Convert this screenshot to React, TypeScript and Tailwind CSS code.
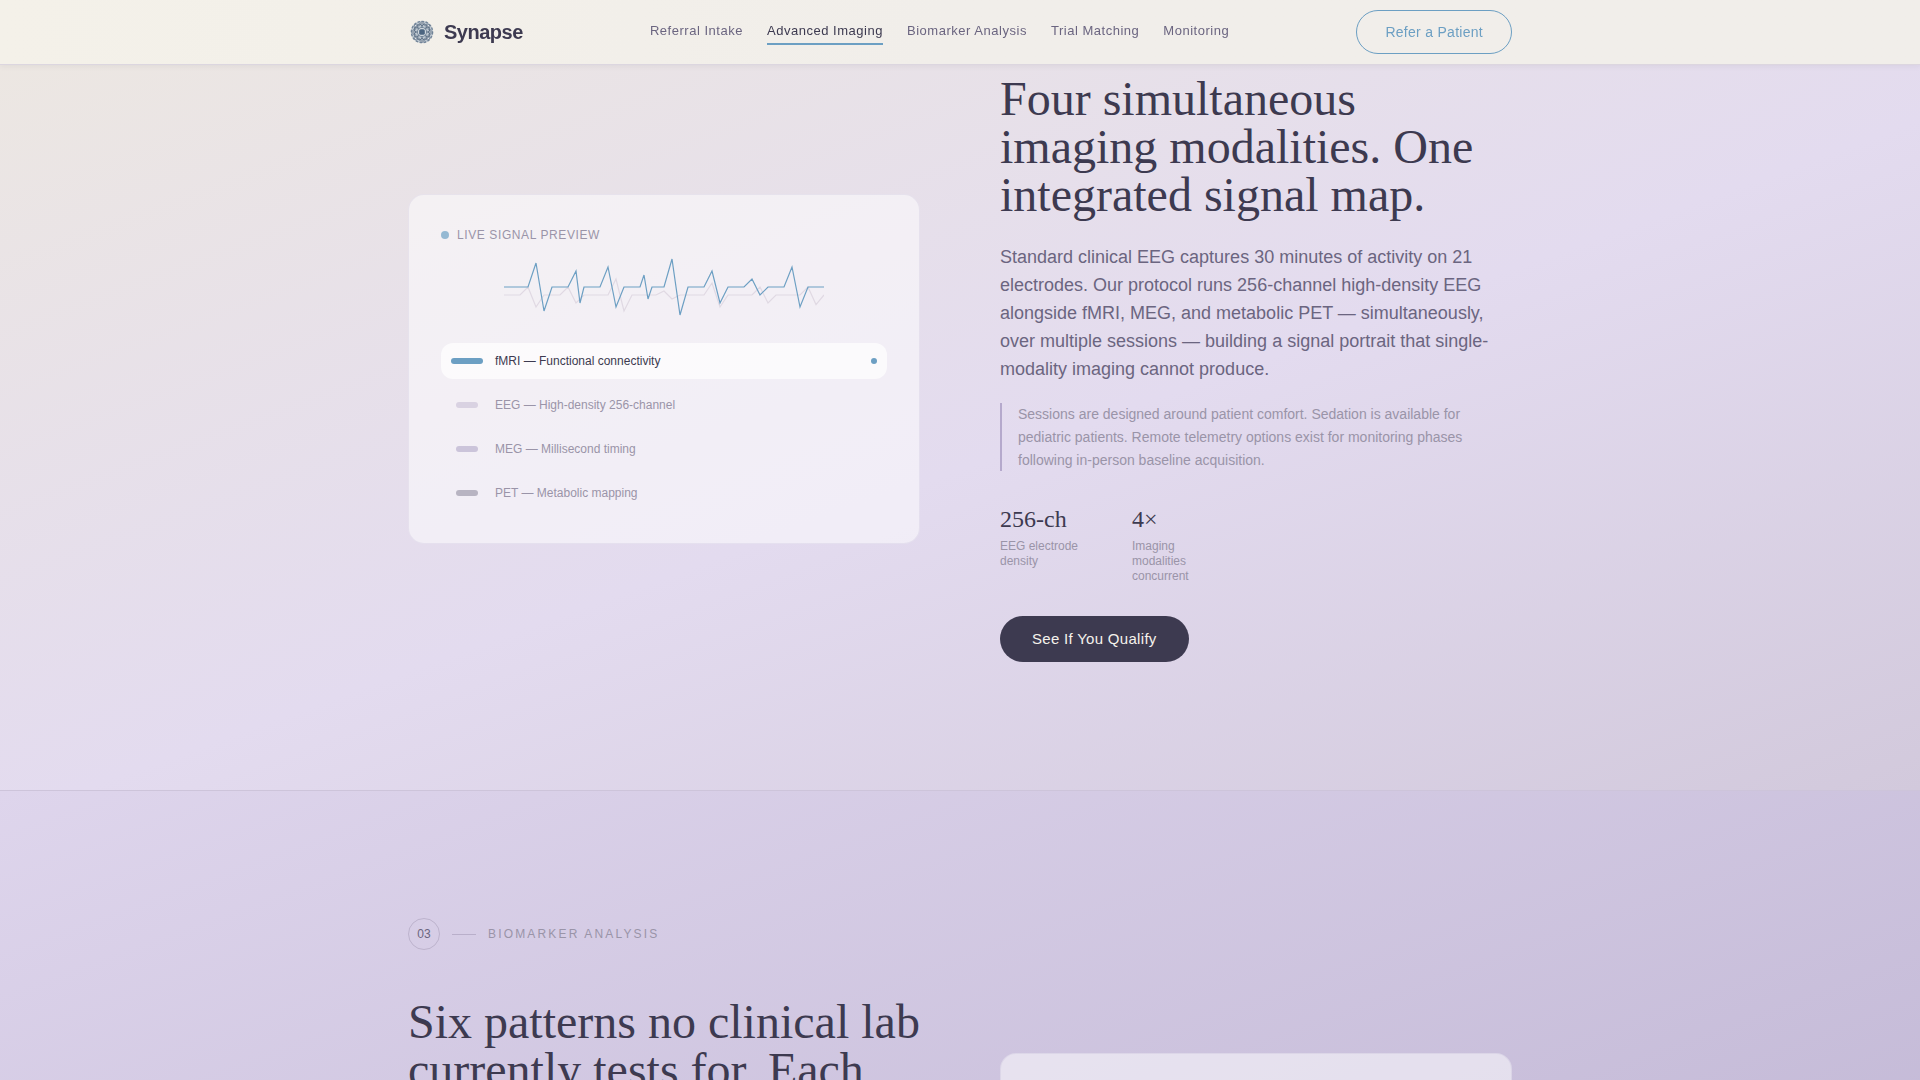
import React from 'react';

const SANS = "font-['Liberation_Sans',Arial,sans-serif]";
const SERIF = "font-['Liberation_Serif','Times_New_Roman',serif]";

const NAV_LINKS = [
  { label: 'Referral Intake', href: '#referral' },
  { label: 'Advanced Imaging', href: '#imaging', active: true },
  { label: 'Biomarker Analysis', href: '#biomarkers' },
  { label: 'Trial Matching', href: '#trials' },
  { label: 'Monitoring', href: '#monitoring' },
];

const MODALITIES = [
  { label: 'fMRI — Functional connectivity', color: 'bg-[#6c9fc3]', active: true },
  { label: 'EEG — High-density 256-channel', color: 'bg-[#d9d2e2]' },
  { label: 'MEG — Millisecond timing', color: 'bg-[#cbc4da]' },
  { label: 'PET — Metabolic mapping', color: 'bg-[#b8b4c2]' },
];

const PETALS = [0, 45, 90, 135, 180, 225, 270, 315];

const Logo: React.FC = () => (
  <svg viewBox="0 0 28 28" className="size-7" fill="none" aria-hidden="true">
    <circle cx="14" cy="14" r="11" fill="#bcc6cf" />
    <circle cx="14" cy="14" r="10.6" stroke="#74869a" strokeWidth="1.4" strokeDasharray="2.6 1.5" />
    {PETALS.map((angle) => (
      <g key={angle} transform={`rotate(${angle} 14 14)`} stroke="#5d7085">
        <path d="M14 10.6V8.2M14 8.2L11.6 5.4M14 8.2L16.4 5.4" strokeWidth="1" />
        <circle cx="14" cy="5" r="1.2" fill="#e0e3e6" strokeWidth="0.8" />
        <circle cx="17" cy="6.8" r="0.9" fill="#5d7085" stroke="none" />
      </g>
    ))}
    <circle cx="14" cy="14" r="4.6" fill="#cfd7dd" stroke="#6f8296" strokeWidth="0.9" />
    <rect x="11.2" y="11.2" width="5.6" height="5.6" rx="1.6" fill="#4c6580" />
  </svg>
);

const Header: React.FC = () => (
  <header className="fixed inset-x-0 top-0 z-10 border-b border-[#dcd6df] bg-linear-to-r from-[#f4f1e9] via-[#f1eeea] to-[#f1eeea] shadow-[0_1px_6px_rgba(61,58,80,0.08)]">
    <div className="mx-auto flex h-16 max-w-[1200px] items-center justify-between px-12">
      <a href="#top" className="flex items-center gap-2 text-xl font-bold tracking-tight text-[#3d3a50]">
        <Logo />
        Synapse
      </a>
      <nav className="flex gap-6 text-[13px] leading-4 tracking-[0.04em] text-[#6b6580]">
        {NAV_LINKS.map((link) => (
          <a
            key={link.label}
            href={link.href}
            className={
              link.active
                ? 'border-b-2 border-[#6c9fc3] pt-1 pb-1 text-[#3d3a50]'
                : 'border-b-2 border-transparent pt-1 pb-1'
            }
          >
            {link.label}
          </a>
        ))}
      </nav>
      <button
        type="button"
        className="h-11 rounded-full border border-[#6c9fc3] px-7 text-sm tracking-[0.02em] text-[#6c9fc3]"
      >
        Refer a Patient
      </button>
    </div>
  </header>
);

const SignalTrace: React.FC = () => (
  <svg viewBox="0 0 400 80" className="mx-auto mt-3 mb-6 h-16 w-80" fill="none" aria-hidden="true">
    <polyline
      points="0,50 20,50 30,40 40,65 50,50 70,50 80,40 90,60 100,50 130,50 140,30 150,70 160,50 190,50 200,45 210,55 220,50 250,50 260,35 270,65 280,50 310,50 320,40 330,60 340,50 370,50 380,40 390,62 400,50"
      stroke="#e0d9e3"
      strokeWidth="1.5"
    />
    <polyline
      points="0,40 30,40 40,10 50,70 60,40 80,40 90,20 95,60 100,40 120,40 130,15 140,65 150,40 170,40 175,25 180,55 185,40 200,40 210,5 220,75 230,40 250,40 260,20 270,60 280,40 300,40 310,30 320,50 330,40 350,40 360,15 370,65 380,40 400,40"
      stroke="#6c9fc3"
      strokeWidth="1.5"
    />
  </svg>
);

const SignalCard: React.FC = () => (
  <div className="rounded-2xl border border-[#b5a9cc]/20 bg-white/50 p-8 text-xs">
    <div className="flex h-4 items-center gap-2 tracking-wider text-[#9a94a8]">
      <span className="size-2 rounded-full bg-[#95b9d3]" />
      LIVE SIGNAL PREVIEW
    </div>
    <SignalTrace />
    <ul className="flex flex-col gap-2">
      {MODALITIES.map((item) => (
        <li
          key={item.label}
          className={
            item.active
              ? 'flex h-9 items-center gap-3 rounded-xl bg-white/70 px-[10px] text-[#3d3a50]'
              : 'flex h-9 items-center gap-3 rounded-xl px-[10px] text-[#9a94a8]'
          }
        >
          <span className="flex w-8 justify-center">
            <span className={`h-[6px] rounded-full ${item.active ? 'w-8' : 'w-[22px]'} ${item.color}`} />
          </span>
          {item.label}
          {item.active && <span className="ml-auto size-[6px] rounded-full bg-[#6c9fc3]" />}
        </li>
      ))}
    </ul>
  </div>
);

const ImagingSection: React.FC = () => (
  <section
    id="imaging"
    className="bg-[linear-gradient(160deg,#ede8e1_0%,#e3dbef_55%,#d2c9dc_100%)] pt-[75px] pb-32"
  >
    <div className="mx-auto grid max-w-[1200px] grid-cols-2 items-center gap-20 px-12">
      <SignalCard />
      <div>
        <h2 className={`${SERIF} text-5xl leading-none text-[#3d3a50]`}>
          Four simultaneous imaging modalities. One integrated signal map.
        </h2>
        <p className="mt-6 text-lg leading-7 text-[#6b6580]">
          Standard clinical EEG captures 30 minutes of activity on 21 electrodes. Our protocol runs
          256-channel high-density EEG alongside fMRI, MEG, and metabolic PET — simultaneously, over
          multiple sessions — building a signal portrait that single-modality imaging cannot produce.
        </p>
        <p className="mt-5 border-l-2 border-[#b5a9cc] pl-4 text-sm leading-relaxed text-[#9a94a8]">
          Sessions are designed around patient comfort. Sedation is available for pediatric
          patients. Remote telemetry options exist for monitoring phases following in-person
          baseline acquisition.
        </p>
        <dl className="mt-8 flex gap-12">
          <div className="flex w-[84px] flex-col-reverse justify-end gap-1">
            <dt className="text-xs leading-[15px] text-[#9a94a8]">EEG electrode density</dt>
            <dd className={`${SERIF} text-2xl leading-8 text-[#3d3a50]`}>256-ch</dd>
          </div>
          <div className="flex w-[60px] flex-col-reverse justify-end gap-1">
            <dt className="text-xs leading-[15px] text-[#9a94a8]">Imaging modalities concurrent</dt>
            <dd className={`${SERIF} text-2xl leading-8 text-[#3d3a50]`}>4×</dd>
          </div>
        </dl>
        <button
          type="button"
          className="mt-8 h-[46px] rounded-full bg-[#3d3a50] px-8 text-[15px] tracking-[0.02em] text-[#f5f2ec]"
        >
          See If You Qualify
        </button>
      </div>
    </div>
  </section>
);

const BiomarkerSection: React.FC = () => (
  <section
    id="biomarkers"
    className="border-t border-[#cdc4da] bg-[linear-gradient(160deg,#ded5ec_0%,#c4bad7_75%)] pt-[127px] pb-32"
  >
    <div className="mx-auto max-w-[1200px] px-12">
      <div className="mb-12 flex items-center gap-3 text-xs text-[#9a94a8]">
        <span className="flex size-8 items-center justify-center rounded-full border border-[#bdb3cd] text-[#6b6580]">
          03
        </span>
        <span className="h-px w-6 bg-[#b9afca]" />
        <span className="tracking-[0.18em]">BIOMARKER ANALYSIS</span>
      </div>
      <div className="grid grid-cols-2 gap-20">
        <h2 className={`${SERIF} text-5xl leading-none text-[#3d3a50]`}>
          Six patterns no clinical lab currently tests for. Each
        </h2>
        <div className="mt-[55px] h-80 rounded-2xl border border-[#b5a9cc]/20 bg-white/50" />
      </div>
    </div>
  </section>
);

const App: React.FC = () => (
  <div id="top" className={`${SANS} h-screen overflow-hidden`}>
    <Header />
    <main>
      <ImagingSection />
      <BiomarkerSection />
    </main>
  </div>
);

export default App;
